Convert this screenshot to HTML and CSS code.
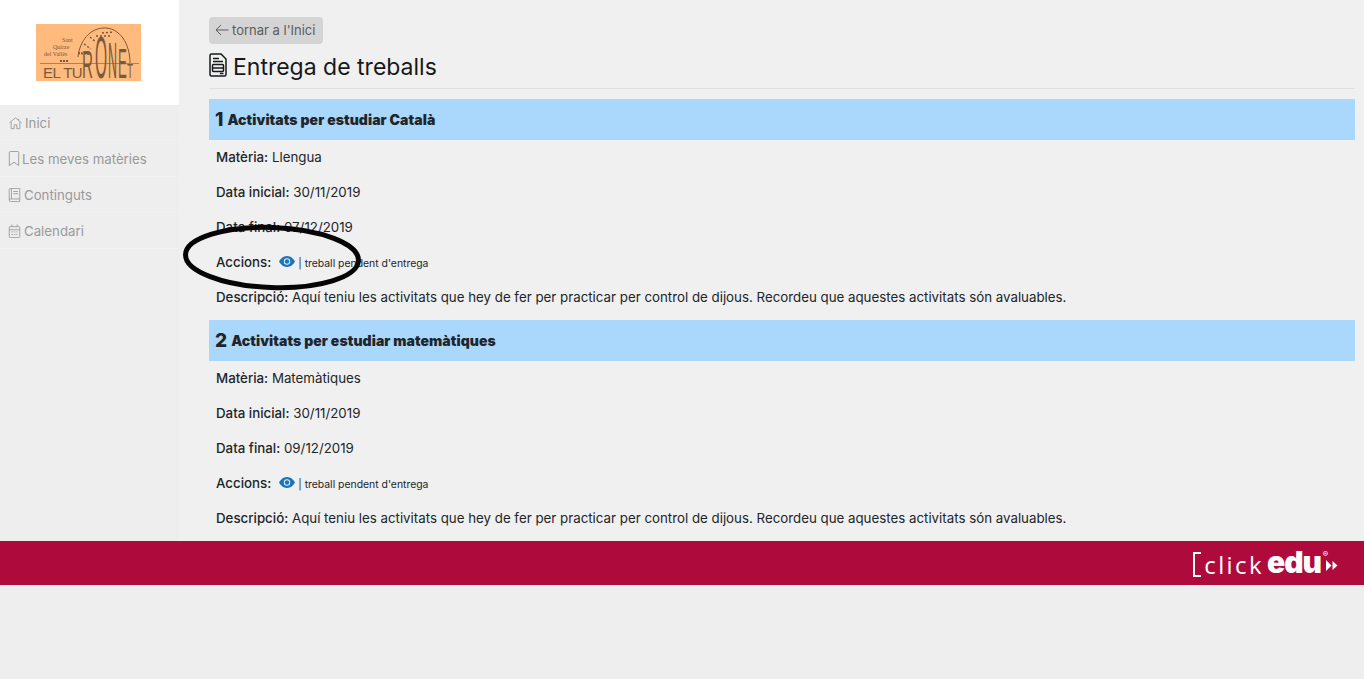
FILE: index.html
```html
<!DOCTYPE html>
<html lang="ca">
<head>
<meta charset="utf-8">
<title>Entrega de treballs</title>
<link rel="stylesheet" href="styles.css">
</head>
<body>
<div class="layout">
  <aside class="sidebar">
    <div class="logo-box">
      <svg class="logo" viewBox="0 -10 105 81" width="105" height="81">
        <rect width="105" height="57" fill="#ffbb7d"/>
        <g fill="none" stroke="#7a5a3c">
          <path d="M42 33C44 16 54 5 67 4C84 3 94 20 94 39" stroke-width="1"/>
          <path d="M4 39.500H103" stroke-width=".6"/>
          <path d="M48 20L55 25M54 13L60 18M60 12H76M66 9L78 8" stroke-width="1.500" stroke-dasharray="2 2"/>
          <path d="M42 29L54 30M24 37H32" stroke-width="2" stroke-dasharray="2 1"/>
        </g>
        <g class="logo-small" fill="#7a5a3c">
          <text x="26" y="18">Sant</text>
          <text x="17" y="25">Quirze</text>
          <text x="8" y="32">del Vallès</text>
        </g>
        <g class="logo-big" fill="#7a5a3c">
          <text class="lt-base" x="7" y="54">EL TU</text>
          <text class="lt-r" transform="translate(46 54) scale(.39 1)">R</text>
          <text class="lt-o" transform="translate(59 54) scale(.26 1)">O</text>
          <text class="lt-n" transform="translate(72 54) scale(.25 1)">N</text>
          <text class="lt-e" transform="translate(82 54) scale(.31 1)">E</text>
          <text class="lt-t" transform="translate(91 54) scale(.5 1)">T</text>
        </g>
      </svg>
    </div>
    <nav class="nav">
      <a class="nav-item">
        <svg class="nav-icon home" viewBox="0 0 16 16"><path d="M1 8L8 2L15 8M3 7V14.500H6.500V10H9.500V14.500H13V7M11.500 3V5"/></svg>
        <span>Inici</span>
      </a>
      <a class="nav-item">
        <svg class="nav-icon narrow" viewBox="0 0 11 16"><path d="M.5 1.500A1 1 0 0 1 1.500 .5H9.500A1 1 0 0 1 10.500 1.500V15.500L5.500 12L.5 15.500Z"/></svg>
        <span>Les meves matèries</span>
      </a>
      <a class="nav-item">
        <svg class="nav-icon book" viewBox="0 0 13 16"><path d="M.5 13.500V1.500A1 1 0 0 1 1.500 .5H12.500V12.500H2A1.500 1.500 0 0 0 .5 14A1.500 1.500 0 0 0 2 15.500H12.500V12.500M3 .5V12.500M5 4H10.500M5 6.500H10.500"/></svg>
        <span>Continguts</span>
      </a>
      <a class="nav-item">
        <svg class="nav-icon book" viewBox="0 0 13 16"><path d="M1.500 3H11.500A1 1 0 0 1 12.500 4V14.500A1 1 0 0 1 11.500 15.500H1.500A1 1 0 0 1 .5 14.500V4A1 1 0 0 1 1.500 3ZM.5 6.500H12.500M3.500 .5V3M9.500 .5V3M3 9H5M6 9H7.500M8.500 9H10M3 12H5M6 12H7.500M8.500 12H10"/></svg>
        <span>Calendari</span>
      </a>
    </nav>
  </aside>

  <main class="main">
    <a class="back-btn">
      <svg class="back-icon" viewBox="0 0 14 12"><path d="M13.500 6H1M6 1L1 6L6 11"/></svg>
      <span>tornar a l'Inici</span>
    </a>
    <h1 class="page-title">
      <svg class="title-icon" viewBox="0 0 18 24"><path d="M2.500 1H12L17 6V21.500A1.500 1.500 0 0 1 15.500 23H2.500A1.500 1.500 0 0 1 1 21.500V2.500A1.500 1.500 0 0 1 2.500 1ZM4 5.500H10M4 8.500H14"/><rect x="3.500" y="11.500" width="11" height="7" rx="1"/><path d="M3.500 15H14.500M11 20.500H14.500"/></svg>
      <span>Entrega de treballs</span>
    </h1>

    <section class="task">
      <h2 class="task-head"><span class="task-num">1</span> Activitats per estudiar Català</h2>
      <p class="row"><b>Matèria:</b> Llengua</p>
      <p class="row"><b>Data inicial:</b> 30/11/2019</p>
      <p class="row"><b>Data final:</b> 07/12/2019</p>
      <p class="row"><b>Accions:</b>
        <svg class="eye" viewBox="0 0 16 11"><path d="M8 0C4 0 1.500 3 0 5.500C1.500 8 4 11 8 11C12 11 14.500 8 16 5.500C14.500 3 12 0 8 0Z"/><circle cx="8" cy="5.500" r="3.200" fill="#f0f0f0"/><circle cx="8" cy="5.500" r="2.200"/></svg>
        <small class="status">| treball pendent d'entrega</small>
      </p>
      <p class="row"><b>Descripció:</b> Aquí teniu les activitats que hey de fer per practicar per control de dijous. Recordeu que aquestes activitats són avaluables.</p>
    </section>

    <section class="task">
      <h2 class="task-head"><span class="task-num">2</span> Activitats per estudiar matemàtiques</h2>
      <p class="row"><b>Matèria:</b> Matemàtiques</p>
      <p class="row"><b>Data inicial:</b> 30/11/2019</p>
      <p class="row"><b>Data final:</b> 09/12/2019</p>
      <p class="row"><b>Accions:</b>
        <svg class="eye" viewBox="0 0 16 11"><path d="M8 0C4 0 1.500 3 0 5.500C1.500 8 4 11 8 11C12 11 14.500 8 16 5.500C14.500 3 12 0 8 0Z"/><circle cx="8" cy="5.500" r="3.200" fill="#f0f0f0"/><circle cx="8" cy="5.500" r="2.200"/></svg>
        <small class="status">| treball pendent d'entrega</small>
      </p>
      <p class="row"><b>Descripció:</b> Aquí teniu les activitats que hey de fer per practicar per control de dijous. Recordeu que aquestes activitats són avaluables.</p>
    </section>
  </main>
</div>

<footer class="footer">
  <div class="brand">
    <span class="bracket"></span>
    <span class="click">click</span><span class="edu">edu</span>
    <span class="reg">®</span>
    <svg class="arrows" viewBox="0 0 12 11" width="12" height="11"><path d="M0 0L5.500 5.500L0 11ZM6.500 1L11.500 5.500L6.500 10Z" fill="#fff"/></svg>
  </div>
</footer>

<svg class="annotation" width="184" height="70" viewBox="0 0 184 70">
  <ellipse cx="92" cy="34.500" rx="86.500" ry="30" fill="none" stroke="#050505" stroke-width="5" transform="rotate(2 92 34.500)"/>
</svg>
</body>
</html>
```
FILE: styles.css
```css
* { box-sizing: border-box; }
html, body { margin: 0; padding: 0; height: 100%; }
body {
  background: #eeeeee;
  font-family: Inter, "Liberation Sans", sans-serif;
  color: #212529;
  position: relative;
  overflow: hidden;
}
.layout { display: flex; height: 541px; }
.sidebar { width: 179px; flex: none; background: #eeeeee; }
.logo-box {
  height: 105px;
  background: #fff;
  display: flex;
  padding: 14px 0 0 36px;
}
.logo { display: block; }
.logo-small text { font-size: 6px; font-family: "Liberation Serif", serif; }
.logo-big text { font-family: "Liberation Sans", sans-serif; }
.lt-base { font-size: 15px; letter-spacing: -.5px; }
.lt-r { font-size: 39px; }
.lt-o { font-size: 60px; }
.lt-n { font-size: 50px; }
.lt-e { font-size: 43px; }
.lt-t { font-size: 20px; }
.nav { display: flex; flex-direction: column; }
.nav-item {
  height: 36px;
  display: flex;
  align-items: center;
  gap: 2px;
  padding-left: 8px;
  font-size: 13.250px;
  color: #9a9a9a;
  border-bottom: 1px solid #f1f1f1;
}
.nav-icon { width: 14px; height: 14px; fill: none; stroke: #9a9a9a; stroke-width: 1; flex: none; }
.nav-icon.home { width: 15px; }
.nav-icon.narrow { width: 12px; height: 15px; }
.nav-icon.book { width: 13px; height: 14px; margin-right: 1px; }
.main {
  flex: 1;
  min-width: 0;
  background: #f0f0f0;
  padding: 17px 9px 0 30px;
}
.back-btn {
  display: inline-flex;
  align-items: center;
  gap: 3px;
  height: 27px;
  padding: 0 8px 2px 6px;
  background: #d4d4d4;
  border-radius: 4px;
  font-size: 13px;
  color: #5c5c5c;
}
.back-icon { width: 14px; height: 12px; fill: none; stroke: #5c5c5c; stroke-width: 1; }
.page-title {
  margin: 7px 0 0;
  height: 38px;
  display: flex;
  align-items: flex-start;
  gap: 6px;
  padding-top: 1px;
  font-size: 23px;
  line-height: 30px;
  font-weight: 400;
  color: #16181b;
  border-bottom: 1px solid #e0e0e0;
}
.title-icon { width: 18px; height: 24px; fill: none; stroke: #16181b; stroke-width: 1.500; margin-top: 1px; }
.task { margin-top: 10px; }
.task + .task { margin-top: 0; }
.task-head {
  margin: 0 0 -1px;
  height: 41px;
  display: flex;
  align-items: center;
  gap: 4px;
  padding-left: 6px;
  background: #aad7fc;
  font-size: 14px;
  font-weight: 900;
  letter-spacing: .07px;
  color: #212529;
}
.task-num { font-size: 19px; font-weight: 800; }
.row {
  margin: 0 0 0 7px;
  height: 35px;
  display: flex;
  align-items: center;
  font-size: 13.300px;
  color: #212529;
  white-space: pre-wrap;
}
.row b { font-weight: 500; }
.row:last-child { height: 41px; padding-bottom: 6px; }
.eye { width: 16px; height: 11px; fill: #1b75bb; margin: -1px 3px 0 8px; }
.status { font-size: 10.400px; color: #212529; margin-top: 3px; }
.footer {
  height: 44px;
  background: #ae0b3c;
  display: flex;
  justify-content: flex-end;
  align-items: center;
  padding-right: 26px;
}
.brand { display: flex; align-items: center; color: #fff; height: 44px; position: relative; }
.bracket {
  width: 8px;
  height: 25px;
  border: 2px solid #fff;
  border-right: 0;
  margin-top: 3px;
  margin-right: 3px;
}
.click { font-size: 24px; letter-spacing: 2.400px; font-family: "Open Sans", sans-serif; font-weight: 400; margin-top: 2px; }
.edu { font-size: 30px; font-weight: 900; letter-spacing: -1px; margin-left: 3px; margin-top: -3px; line-height: 1; }
.reg { font-size: 8px; position: absolute; right: 10px; top: 8px; }
.arrows { margin-left: 5px; margin-top: 4px; }
.annotation { position: absolute; left: 180px; top: 223px; }
```
